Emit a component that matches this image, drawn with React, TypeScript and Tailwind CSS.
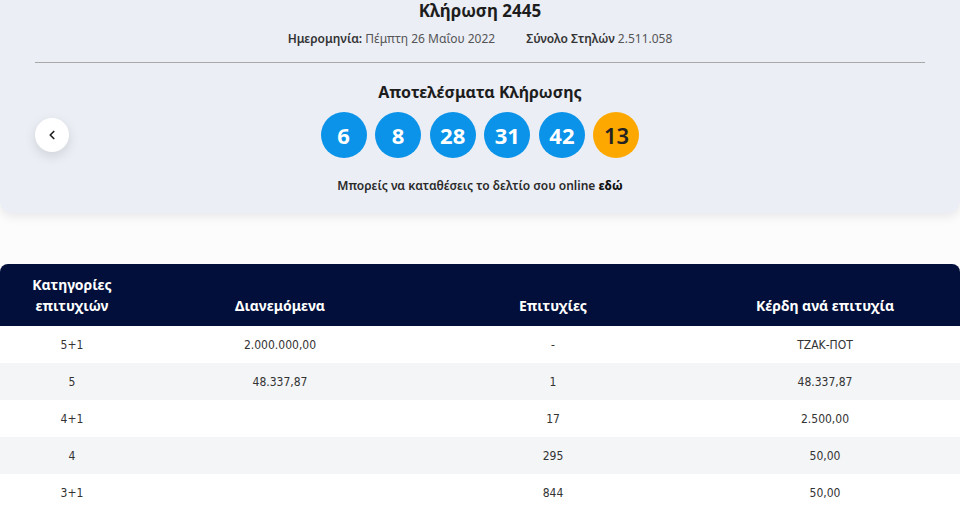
import { ChevronLeft } from "lucide-react";

const balls = [6, 8, 28, 31, 42];
const bonus = 13;

const rows = [
  { cat: "5+1", dist: "2.000.000,00", wins: "-", prize: "ΤΖΑΚ-ΠΟΤ" },
  { cat: "5", dist: "48.337,87", wins: "1", prize: "48.337,87" },
  { cat: "4+1", dist: "", wins: "17", prize: "2.500,00" },
  { cat: "4", dist: "", wins: "295", prize: "50,00" },
  { cat: "3+1", dist: "", wins: "844", prize: "50,00" },
];

const head = "font-['Noto_Sans',sans-serif]";
const cond =
  "font-['Liberation_Sans_Narrow','DejaVu_Sans_Condensed','Roboto_Condensed',sans-serif]";

export default function App() {
  return (
    <div className={`w-[960px] h-[508px] overflow-hidden bg-[#fcfcfc] ${head}`}>
      <div className="bg-[#ebeef5] rounded-b-xl shadow-[0_4px_10px_rgba(0,0,0,0.08)] h-[213px] pt-[1px]">
        <h1 className="text-center text-[17px] leading-[20px] font-bold text-[#1d1d1d]">
          Κλήρωση 2445
        </h1>
        <div className="flex justify-center gap-[31px] mt-[9px] text-[12px] leading-[18px] text-[#555]">
          <span>
            <b className="font-semibold text-[#333]">Ημερομηνία:</b> Πέμπτη 26 Μαΐου 2022
          </span>
          <span>
            <b className="font-semibold text-[#333]">Σύνολο Στηλών</b> 2.511.058
          </span>
        </div>
        <div className="mx-[35px] mt-[14px] border-t border-[#a8a8a8]" />
        <div className="flex items-start px-[35px] mt-[19px]">
          <button className="w-[34px] h-[34px] shrink-0 rounded-full bg-white shadow-[0_4px_12px_rgba(0,0,0,0.12)] flex items-center justify-center mt-[36px]">
            <ChevronLeft size={14} strokeWidth={3} className="text-[#222]" />
          </button>
          <div className="flex-1 flex flex-col items-center mr-[34px]">
            <h2 className="text-[16px] leading-[20px] font-bold text-[#1d1d1d]">
              Αποτελέσματα Κλήρωσης
            </h2>
            <div className="flex gap-[8.6px] mt-[10px]">
              {balls.map((b) => (
                <div
                  key={b}
                  className="w-[46px] h-[46px] rounded-full bg-[#0a93e8] text-white text-[22px] font-bold flex items-center justify-center"
                >
                  {b}
                </div>
              ))}
              <div className="w-[46px] h-[46px] rounded-full bg-[#fca800] text-[#222] text-[22px] font-semibold flex items-center justify-center">
                {bonus}
              </div>
            </div>
            <p className="mt-[20px] text-[12px] leading-[16px] font-semibold text-[#2a2a2a]">
              Μπορείς να καταθέσεις το δελτίο σου online <b className="font-extrabold text-[#111]">εδώ</b>
            </p>
          </div>
        </div>
      </div>

      <div className="mt-[51px]">
        <div className="grid grid-cols-[144px_272px_274px_1fr] bg-[#020f3b] rounded-t-lg h-[62px] items-end pb-[10px] text-white text-[14px] leading-[21px] font-bold text-center">
          <div>
            Κατηγορίες
            <br />
            επιτυχιών
          </div>
          <div>Διανεμόμενα</div>
          <div>Επιτυχίες</div>
          <div>Κέρδη ανά επιτυχία</div>
        </div>
        {rows.map((r, i) => (
          <div
            key={r.cat}
            className={`grid grid-cols-[144px_272px_274px_1fr] h-[37px] items-center text-center text-[12px] text-[#333] ${cond} ${
              i % 2 === 1 ? "bg-[#f4f5f7]" : "bg-white"
            }`}
          >
            <div>{r.cat}</div>
            <div>{r.dist}</div>
            <div>{r.wins}</div>
            <div>{r.prize}</div>
          </div>
        ))}
      </div>
    </div>
  );
}
